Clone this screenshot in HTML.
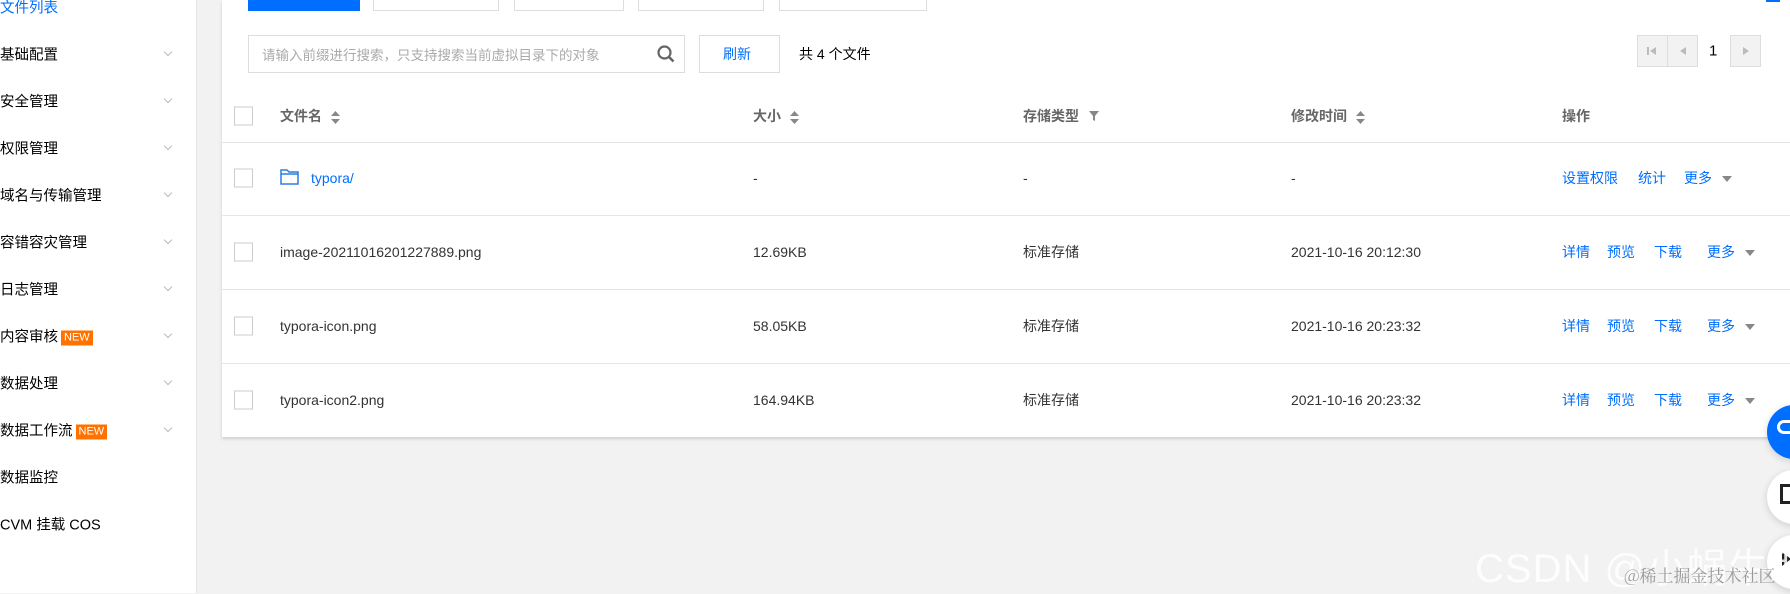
<!DOCTYPE html>
<html><head><meta charset="utf-8"><style>
*{margin:0;padding:0;box-sizing:border-box}
body{width:1790px;height:593px;overflow:hidden;background:#f2f2f2;font-family:"Liberation Sans","Noto Sans CJK SC",sans-serif;font-size:14px;color:#333;position:relative}
.a{position:absolute;white-space:nowrap}
#side{position:absolute;left:0;top:0;width:197px;height:593px;background:#fff;border-right:1px solid #e5e5e5}
.si{position:absolute;left:0;font-size:14.5px;color:#000;transform:translateY(-50%)}
.chev{position:absolute;left:165px;width:6px;height:6px;border-right:1px solid #bbb;border-bottom:1px solid #bbb;transform:rotate(45deg)}
.new{display:inline-block;background:#ff7200;color:#fff;font-size:11px;padding:1px 3px;margin-left:3px;vertical-align:1px;line-height:13px}
#panel{position:absolute;left:222px;top:0;width:1568px;height:437px;background:#fff;box-shadow:0 2px 3px rgba(0,0,0,.15)}
.btn{position:absolute;top:0;height:11px;border:1px solid #ddd;border-top:none;background:#fff}
.hl{position:absolute;left:222px;right:0;height:1px;background:#e5e5e5}
.cb{position:absolute;left:234px;width:19px;height:19px;border:1px solid #ccc;background:#fff;transform:translateY(-50%)}
.t{position:absolute;transform:translateY(-50%);white-space:nowrap;font-size:14px}
.h{color:#666;font-weight:bold}
.lk{color:#006eff}
.sort{display:inline-block;margin-left:9px;vertical-align:middle}
.tri{display:inline-block;width:0;height:0;border-left:5px solid transparent;border-right:5px solid transparent;border-top:6px solid #888;margin-left:10px;vertical-align:middle}
.circ{position:absolute;width:54px;height:54px;border-radius:50%;background:#fff;box-shadow:0 2px 8px rgba(0,0,0,.15)}
</style></head><body>
<div id="side">
<div class="si" style="top:7px;color:#006eff">文件列表</div>
<div class="si" style="top:54px">基础配置</div><div class="chev" style="top:49px"></div>
<div class="si" style="top:101px">安全管理</div><div class="chev" style="top:96px"></div>
<div class="si" style="top:148px">权限管理</div><div class="chev" style="top:143px"></div>
<div class="si" style="top:195px">域名与传输管理</div><div class="chev" style="top:190px"></div>
<div class="si" style="top:242px">容错容灾管理</div><div class="chev" style="top:237px"></div>
<div class="si" style="top:289px">日志管理</div><div class="chev" style="top:284px"></div>
<div class="si" style="top:336px">内容审核<span class="new">NEW</span></div><div class="chev" style="top:331px"></div>
<div class="si" style="top:383px">数据处理</div><div class="chev" style="top:378px"></div>
<div class="si" style="top:430px">数据工作流<span class="new">NEW</span></div><div class="chev" style="top:425px"></div>
<div class="si" style="top:477px">数据监控</div>
<div class="si" style="top:524px">CVM 挂载 COS</div>
</div>
<div id="panel"></div>
<div class="btn" style="left:248px;width:112px;background:#006eff;border-color:#006eff"></div>
<div class="btn" style="left:373px;width:126px"></div>
<div class="btn" style="left:514px;width:110px"></div>
<div class="btn" style="left:638px;width:126px"></div>
<div class="btn" style="left:779px;width:148px"></div>
<div class="a" style="left:1766px;top:0;width:14px;height:2px;background:#006eff"></div>

<div class="a" style="left:248px;top:35px;width:437px;height:38px;border:1px solid #ddd;background:#fff"></div>
<div class="t" style="left:262px;top:54px;color:#aaa;font-size:13.5px">请输入前缀进行搜索，只支持搜索当前虚拟目录下的对象</div>
<svg class="a" style="left:656px;top:44px" width="20" height="20" viewBox="0 0 20 20"><circle cx="8.5" cy="8.5" r="6" fill="none" stroke="#666" stroke-width="2.2"/><path d="M13 13l4.5 4.5" stroke="#666" stroke-width="2.6"/></svg>
<div class="a" style="left:699px;top:35px;width:81px;height:38px;border:1px solid #ddd;background:#fff"></div>
<div class="t lk" style="left:723px;top:54px">刷新</div>
<div class="t" style="left:799px;top:54px;color:#000">共 4 个文件</div>

<div class="a" style="left:1637px;top:35px;width:124px;height:32px;border:1px solid #ddd;background:#f2f2f2"></div>
<div class="a" style="left:1667px;top:35px;width:1px;height:32px;background:#ddd"></div>
<div class="a" style="left:1697px;top:35px;width:34px;height:32px;background:#fff;border-left:1px solid #ddd;border-right:1px solid #ddd"></div>
<div class="t" style="left:1709px;top:51px;color:#000;font-size:15px">1</div>
<svg class="a" style="left:1646px;top:45px" width="12" height="12"><rect x="1" y="2" width="2" height="8" fill="#bbb"/><path d="M10 2v8L4 6z" fill="#bbb"/></svg>
<svg class="a" style="left:1677px;top:45px" width="12" height="12"><path d="M9 2v8L3 6z" fill="#bbb"/></svg>
<svg class="a" style="left:1740px;top:45px" width="12" height="12"><path d="M3 2v8l6-4z" fill="#bbb"/></svg>

<div class="cb" style="top:116px"></div>
<div class="t h" style="left:280px;top:116px">文件名<svg class="sort" width="9" height="13"><path d="M4.5 0L9 5H0z M4.5 13L0 8h9z" fill="#888"/></svg></div>
<div class="t h" style="left:753px;top:116px">大小<svg class="sort" width="9" height="13"><path d="M4.5 0L9 5H0z M4.5 13L0 8h9z" fill="#888"/></svg></div>
<div class="t h" style="left:1023px;top:116px">存储类型 <svg width="12" height="12" style="vertical-align:-1px;margin-left:5px"><path d="M1 1h10L7 6v5L5 10V6z" fill="#888"/></svg></div>
<div class="t h" style="left:1291px;top:116px">修改时间<svg class="sort" width="9" height="13"><path d="M4.5 0L9 5H0z M4.5 13L0 8h9z" fill="#888"/></svg></div>
<div class="t h" style="left:1562px;top:116px">操作</div>
<div class="hl" style="top:142px"></div>

<div class="cb" style="top:178px"></div>
<svg class="a" style="left:280px;top:168px" width="19" height="17" viewBox="0 0 19 17"><path d="M1 2h6l2 2h9v12H1z M1 6h17" fill="none" stroke="#2d7ee0" stroke-width="1.5"/></svg>
<div class="t lk" style="left:311px;top:178px">typora/</div>
<div class="t" style="left:753px;top:178px">-</div>
<div class="t" style="left:1023px;top:178px">-</div>
<div class="t" style="left:1291px;top:178px">-</div>
<div class="t lk" style="left:1562px;top:178px">设置权限</div>
<div class="t lk" style="left:1638px;top:178px">统计</div>
<div class="t lk" style="left:1684px;top:178px">更多<span class="tri"></span></div>
<div class="hl" style="top:215px"></div>

<div class="cb" style="top:252px"></div>
<div class="t" style="left:280px;top:252px">image-20211016201227889.png</div>
<div class="t" style="left:753px;top:252px">12.69KB</div>
<div class="t" style="left:1023px;top:252px">标准存储</div>
<div class="t" style="left:1291px;top:252px">2021-10-16 20:12:30</div>
<div class="t lk" style="left:1562px;top:252px">详情</div><div class="t lk" style="left:1607px;top:252px">预览</div><div class="t lk" style="left:1654px;top:252px">下载</div><div class="t lk" style="left:1707px;top:252px">更多<span class="tri"></span></div>
<div class="hl" style="top:289px"></div>

<div class="cb" style="top:326px"></div>
<div class="t" style="left:280px;top:326px">typora-icon.png</div>
<div class="t" style="left:753px;top:326px">58.05KB</div>
<div class="t" style="left:1023px;top:326px">标准存储</div>
<div class="t" style="left:1291px;top:326px">2021-10-16 20:23:32</div>
<div class="t lk" style="left:1562px;top:326px">详情</div><div class="t lk" style="left:1607px;top:326px">预览</div><div class="t lk" style="left:1654px;top:326px">下载</div><div class="t lk" style="left:1707px;top:326px">更多<span class="tri"></span></div>
<div class="hl" style="top:363px"></div>

<div class="cb" style="top:400px"></div>
<div class="t" style="left:280px;top:400px">typora-icon2.png</div>
<div class="t" style="left:753px;top:400px">164.94KB</div>
<div class="t" style="left:1023px;top:400px">标准存储</div>
<div class="t" style="left:1291px;top:400px">2021-10-16 20:23:32</div>
<div class="t lk" style="left:1562px;top:400px">详情</div><div class="t lk" style="left:1607px;top:400px">预览</div><div class="t lk" style="left:1654px;top:400px">下载</div><div class="t lk" style="left:1707px;top:400px">更多<span class="tri"></span></div>

<div class="circ" style="left:1767px;top:405px;background:#006eff"></div>
<div class="circ" style="left:1767px;top:470px"></div>
<div class="circ" style="left:1767px;top:535px"></div>
<div class="a" style="left:1777px;top:420px;width:13px;height:14px;border:3px solid #fff;border-right:none;border-radius:8px 0 0 8px"></div>
<div class="a" style="left:1780px;top:484px;width:12px;height:20px;border:3px solid #222;border-right:none"></div>
<div class="a" style="left:1782px;top:552px;width:0;height:0;border-top:7px solid transparent;border-bottom:7px solid transparent;border-left:9px solid #222"></div>

<div class="a" style="left:1475px;top:536px;font-size:40px;color:rgba(255,255,255,.85);letter-spacing:1px">CSDN @小蜗牛耶</div>
<div class="a" style="left:1624px;top:562px;font-size:17px;color:#9a9a9a;font-family:'Noto Serif CJK SC',serif">@稀土掘金技术社区</div>
</body></html>
